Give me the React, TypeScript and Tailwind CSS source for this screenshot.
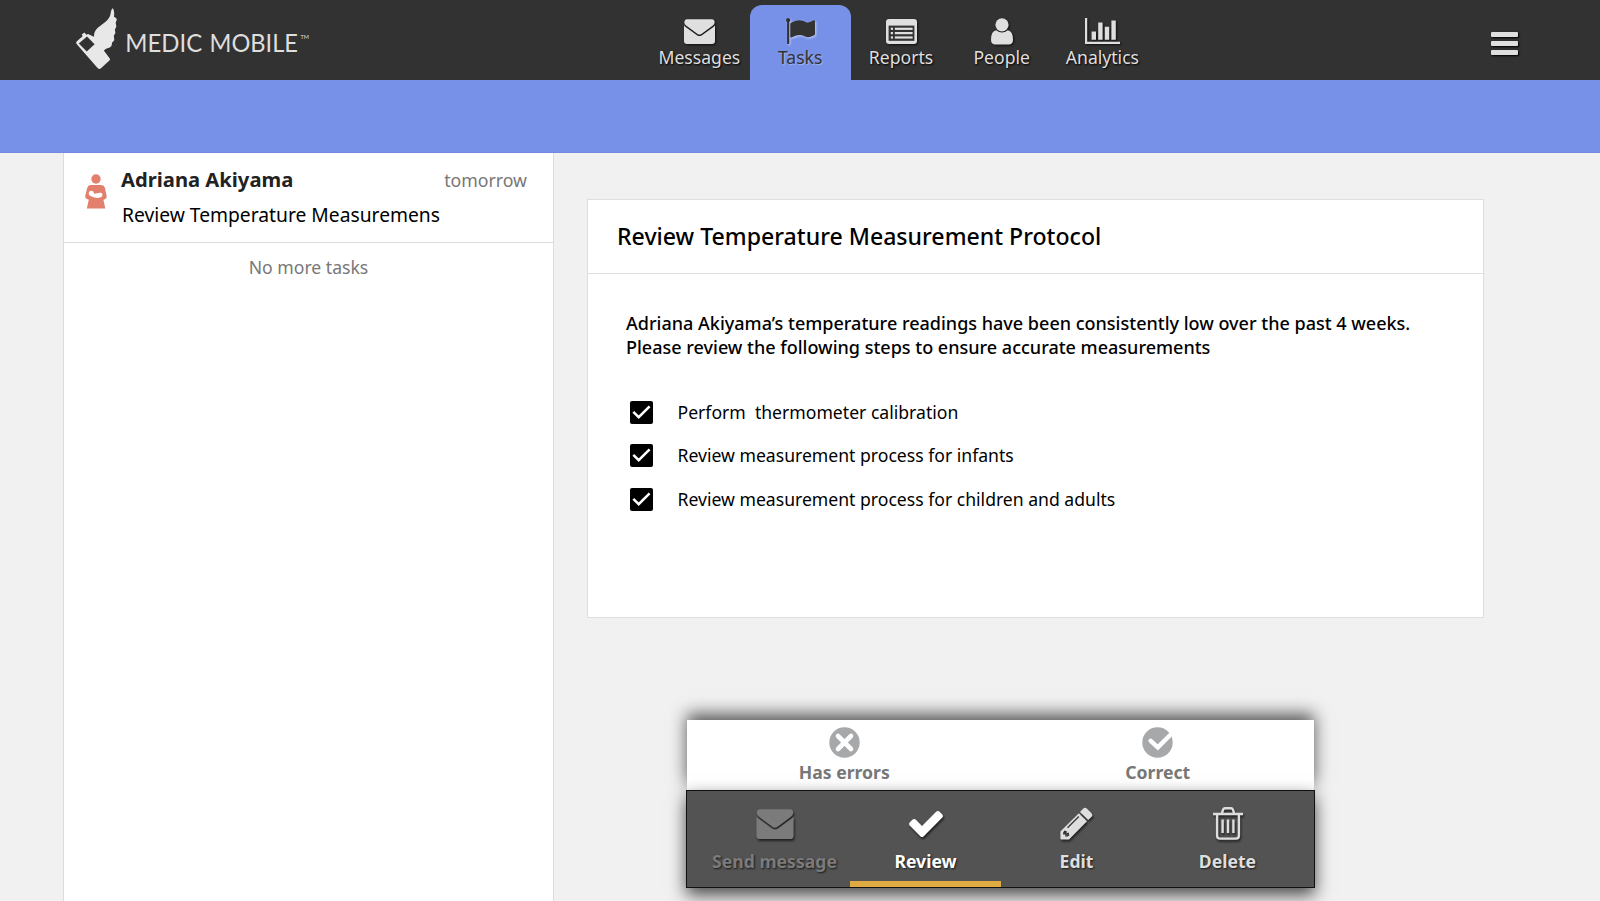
import type { ReactNode } from "react";

const FLAG =
  "M320 256q0 72-64 110v1266q0 13-9.5 22.5t-22.5 9.5h-64q-13 0-22.5-9.5t-9.5-22.5v-1266q-64-38-64-110 0-53 37.5-90.5t90.5-37.5 90.5 37.5 37.5 90.5zm1472 64v763q0 25-12.5 38.5t-39.5 27.5q-215 116-369 116-61 0-123.5-22t-108.5-48-115.5-48-142.5-22q-192 0-464 146-17 9-33 9-26 0-45-19t-19-45v-742q0-32 31-55 21-14 79-43 236-120 421-120 107 0 200 29t219 88q38 19 88 19 54 0 117.5-21t110-47 88-47 54.5-21q26 0 45 19t19 45z";
const CHECK =
  "M1671 566q0 40-28 68l-724 724-136 136q-28 28-68 28t-68-28l-136-136-362-362q-28-28-28-68t28-68l136-136q28-28 68-28t68 28l294 295 656-657q28-28 68-28t68 28l136 136q28 28 28 68z";

function Envelope({ className }: { className: string }) {
  return (
    <svg viewBox="0 0 31 25" className={className} fill="currentColor">
      <path d="M0.3 3.2Q0.6 0.3 3 0.3H28Q30.4 0.3 30.7 3.2Q30.7 5.2 28.6 6.7L17.4 14.9Q15.5 16.2 13.6 14.9L2.4 6.7Q0.3 5.2 0.3 3.2Z" />
      <path d="M0 6.3Q0.6 7.2 1.6 8L13 16.2Q15.5 17.9 18 16.2L29.4 8Q30.4 7.2 31 6.3V22Q31 25 28 25H3Q0 25 0 22Z" />
    </svg>
  );
}

function Flag() {
  return (
    <svg viewBox="64 128 1728 1536" preserveAspectRatio="none" className="h-[26px] w-[29px] drop-shadow-[1px_1px_1px_rgba(255,255,255,0.55)]" fill="currentColor">
      <path d={FLAG} />
    </svg>
  );
}

function Report() {
  return (
    <svg viewBox="0 0 31 25" className="h-[25px] w-[31px]">
      <rect width="31" height="25" rx="3" fill="currentColor" />
      <rect x="2.6" y="6.6" width="25.8" height="15.2" fill="#323232" />
      <g fill="currentColor">
        <rect x="4.8" y="8.7" width="2.2" height="2.2" />
        <rect x="4.8" y="13" width="2.2" height="2.2" />
        <rect x="4.8" y="17.4" width="2.2" height="2.2" />
        <rect x="8.8" y="8.7" width="17.8" height="2.2" />
        <rect x="8.8" y="13" width="17.8" height="2.2" />
        <rect x="8.8" y="17.4" width="17.8" height="2.2" />
      </g>
    </svg>
  );
}

function Person() {
  return (
    <svg viewBox="0 0 22 27" className="h-[27px] w-[22px]" fill="currentColor">
      <path d="M5.2 12.2Q11 17 16.8 12.2Q22 13 22 21.8Q22 26.6 17.6 26.6H4.4Q0 26.6 0 21.8Q0 13 5.2 12.2Z" />
      <circle cx="11" cy="6.8" r="6.6" />
    </svg>
  );
}

function Chart() {
  return (
    <svg viewBox="0 0 35 26" className="h-[26px] w-[35px]" fill="currentColor">
      <path d="M0 0H2.2V23.8H35V26H0ZM6.6 13.4H11V21.8H6.6ZM13.2 4.6H17.6V21.8H13.2ZM19.8 8.8H24.2V21.8H19.8ZM26.4 2.4H30.8V21.8H26.4Z" />
    </svg>
  );
}

function Logo() {
  return (
    <svg viewBox="0 0 240 66" className="ml-[74px] mt-[6px] h-[66px] w-[240px]" fill="#e8e8e8">
      <path d="M38.7 2.3C40.4 4 40.4 8.6 40 10.8Q43 12 42.7 14.2Q41.2 16.4 41.8 17.8Q43 20.6 41.8 22Q40.4 23 41 24.6Q42 27.4 40.4 28.8Q39.4 29.8 40 31.2Q40.8 33.8 39.3 35.4Q37.4 36.4 38 37.6Q38 40.2 35.8 41.6Q32.4 42 29.8 44.4L35.8 52.4Q36.4 53.6 35.4 54.6L27 62.2Q25.4 63.8 23.8 62.2L2.6 38Q1.6 36.8 2.6 35.6L8.6 30.2L7.8 28.6L10.4 26.6L12.4 28.8L14 28L20 30.8Q19.6 25.6 23.8 21.8L31.6 15.8Q36 12 36.6 7.6Q37.2 3.2 38.7 2.3Z" />
      <path d="M13 30.4L20.6 38.2L12.8 45.4L4.8 37.4Z" fill="#323232" />
      <g fontFamily="Lato, sans-serif" fill="#dedede">
        <text x="51.2" y="45.8" fontSize="24.8" textLength="77" lengthAdjust="spacingAndGlyphs">MEDIC</text>
        <text x="135.5" y="45.8" fontSize="24.8" textLength="88.5" lengthAdjust="spacingAndGlyphs">MOBILE</text>
        <text x="226.4" y="32.8" fontSize="6" textLength="8.6" lengthAdjust="spacingAndGlyphs">TM</text>
      </g>
    </svg>
  );
}

function Mother() {
  return (
    <svg viewBox="0 0 22 35" className="h-[35px] w-[22px]" fill="#e37f6d">
      <circle cx="11" cy="5" r="4.7" />
      <path d="M5.6 11H16.4Q19.3 11.2 20 14L21.7 22.3Q21.8 24.4 20 25.2L18.4 25.8L20.3 34.6H1.8L3.8 25.8L1.5 24.8Q0 24 0.2 22L2.2 14Q2.9 11.2 5.6 11Z" />
      <g fill="#fff">
        <circle cx="6.3" cy="19.2" r="2.5" />
        <path d="M7 18.6Q9 20.2 11 19.6Q14 18.4 16 18.8Q17.8 19.4 17.4 21Q17.2 23.6 13 23.9Q9 24.2 4.6 21.6Z" />
      </g>
    </svg>
  );
}

function Pencil() {
  return (
    <svg viewBox="0 0 33 33" className="h-[33px] w-[33px]" fill="currentColor">
      <path fillRule="evenodd" d="M18.8 6.2L27 14.3L9 32.4H1.4Q0.4 32.4 0.4 31.4V24.4ZM18.3 8.9L7 20.2L8 21.2L19.3 9.9ZM4.3 23.6L3.1 25.8V27.6H5.2V29.6L7.2 29.8L9.4 28.6L8.6 25.6L6.5 26.2L6.8 24.2Z" />
      <path d="M20 4.9L23.1 1.7Q25 0 27 1.7L31.4 6.1Q33.1 8.2 31.4 10.1L28.2 13.1Z" />
    </svg>
  );
}

function Trash() {
  return (
    <svg viewBox="0 0 30 33" className="h-[33px] w-[30px]" fill="none" stroke="currentColor" strokeWidth="2.4" strokeLinejoin="round">
      <path d="M0 7H30M8.8 6.5L10.2 2.4Q10.6 1.3 12 1.3H18Q19.4 1.3 19.8 2.4L21.2 6.5M4.1 7V28.5Q4.1 31.6 7 31.6H23Q25.9 31.6 25.9 28.5V7" />
      <path d="M9.6 12.5V26M15 12.5V26M20.4 12.5V26" />
    </svg>
  );
}

function Tick() {
  return (
    <span className="flex size-[23px] items-center justify-center rounded-[2px] bg-black">
      <svg viewBox="0 0 23 23" className="size-[23px]" fill="none" stroke="#fff" strokeWidth="2.5">
        <path d="M3.3 10.8L8.7 16.2L19.6 5.3" />
      </svg>
    </span>
  );
}

function NavItem({ label, icon, active = false }: { label: string; icon: ReactNode; active?: boolean }) {
  return (
    <a
      className={
        active
          ? "flex h-[75px] w-[101px] flex-col items-center rounded-t-[12px] bg-[#7891e8] text-[#333] [text-shadow:1px_1px_1px_rgba(255,255,255,0.3)]"
          : "flex h-[75px] w-[100.7px] flex-col items-center text-[#dfdfdf] [text-shadow:1px_1px_2px_#000]"
      }
    >
      <span className={active ? "mt-[11.5px] flex h-[28px] items-center" : "mt-[12px] flex h-[28px] items-center drop-shadow-[1px_1px_1px_rgba(0,0,0,0.7)]"}>{icon}</span>
      <span className="text-[17.6px] leading-[24px]">{label}</span>
    </a>
  );
}

function Action({ label, icon, tone, selected = false }: { label: string; icon: ReactNode; tone: string; selected?: boolean }) {
  return (
    <button className={`flex h-full w-[151px] flex-col items-center ${tone}`}>
      <span className="mt-[15px] flex h-[35px] items-center drop-shadow-[1px_2px_1px_rgba(0,0,0,0.6)]">{icon}</span>
      <span className="mt-[8px] whitespace-nowrap text-[17.6px] font-bold leading-[24px] [text-shadow:1px_1px_2px_rgba(0,0,0,0.7)]">{label}</span>
      {selected && <span className="mt-auto h-[6px] w-full bg-[#e0ab42]" />}
    </button>
  );
}

export default function App() {
  return (
    <div className="flex h-[901px] w-[1600px] flex-col overflow-hidden bg-[#f1f1f1] font-['Noto_Sans',sans-serif] text-black">
      <header className="flex h-[80px] shrink-0 bg-[#323232]">
        <div className="w-[649px]"><Logo /></div>
        <nav className="flex pt-[5px]">
          <NavItem label="Messages" icon={<Envelope className="h-[25px] w-[31px]" />} />
          <NavItem label="Tasks" icon={<Flag />} active />
          <NavItem label="Reports" icon={<Report />} />
          <NavItem label="People" icon={<Person />} />
          <NavItem label="Analytics" icon={<Chart />} />
        </nav>
        <button className="ml-auto mr-[82px] mt-[32px] flex h-[23px] w-[27px] flex-col justify-between">
          <span className="h-[5px] w-full rounded-[1px] bg-[#dfdfdf] shadow-[1px_1px_2px_#000]" />
          <span className="h-[5px] w-full rounded-[1px] bg-[#dfdfdf] shadow-[1px_1px_2px_#000]" />
          <span className="h-[5px] w-full rounded-[1px] bg-[#dfdfdf] shadow-[1px_1px_2px_#000]" />
        </button>
      </header>
      <div className="h-[73px] shrink-0 border-b border-[#7189e0] bg-[#7891e8]" />
      <main className="flex flex-1">
        <aside className="ml-[63px] w-[491px] border-x border-[#dcdcdc] bg-white">
          <div className="flex h-[90px] border-b border-[#dcdcdc] pl-[21px]">
            <div className="mt-[21px] w-[36px]"><Mother /></div>
            <div className="flex-1 pt-[12px]">
              <div className="flex justify-between pr-[26px]">
                <h2 className="text-[20.2px] font-bold leading-[28px] text-[#222]">Adriana Akiyama</h2>
                <span className="pt-[1px] text-[17.7px] leading-[28px] text-[#777]">tomorrow</span>
              </div>
              <p className="mt-[8px] whitespace-nowrap pl-px text-[19.25px] leading-[26px]">Review Temperature Measuremens</p>
            </div>
          </div>
          <p className="pt-[11px] text-center text-[17.6px] leading-[26px] text-[#777]">No more tasks</p>
        </aside>
        <section className="pl-[33px] pt-[46px]">
          <article className="h-[419px] w-[897px] border border-[#dedede] bg-white">
            <h1 className="flex h-[74px] items-center border-b border-[#dedede] pl-[29px] text-[23.1px] font-medium">Review Temperature Measurement Protocol</h1>
            <p className="whitespace-nowrap pl-[38px] pt-[37px] text-[18.03px] font-medium leading-[24px]">
              Adriana Akiyama’s temperature readings have been consistently low over the past 4 weeks.
              <br />
              Please review the following steps to ensure accurate measurements
            </p>
            <ul className="mt-[42px] flex flex-col gap-[20.4px] pl-[41.5px] text-[17.6px] leading-[23px]">
              <li className="flex gap-[25px] whitespace-pre"><Tick />Perform  thermometer calibration</li>
              <li className="flex gap-[25px]"><Tick />Review measurement process for infants</li>
              <li className="flex gap-[25px]"><Tick />Review measurement process for children and adults</li>
            </ul>
          </article>
          <div className="ml-[99px] mt-[102px] w-[629px]">
            <div className="mx-px flex h-[70px] bg-white shadow-[0_-6px_16px_0_rgba(0,0,0,0.65)]">
              <button className="flex flex-1 flex-col items-center pl-px pt-[7px] text-[#777]">
                <svg viewBox="0 0 31 31" className="size-[31px]">
                  <circle cx="15.5" cy="15.5" r="15.2" fill="#a6a8aa" />
                  <path d="M9 9L22 22M22 9L9 22" stroke="#fff" strokeWidth="4.6" strokeLinecap="round" />
                </svg>
                <span className="mt-[2px] text-[17.6px] font-bold leading-[24px]">Has errors</span>
              </button>
              <button className="flex flex-1 flex-col items-center pl-px pt-[7px] text-[#777]">
                <svg viewBox="0 0 31 31" className="size-[31px]">
                  <circle cx="15.5" cy="15.5" r="15.2" fill="#a6a8aa" />
                  <path d="M8.7 13.8L15.8 20.4L30 6.2" fill="none" stroke="#fff" strokeWidth="4.4" strokeLinecap="round" />
                </svg>
                <span className="mt-[2px] text-[17.6px] font-bold leading-[24px]">Correct</span>
              </button>
            </div>
            <div className="flex h-[98px] justify-center border border-[#111] bg-[#535353] pl-px shadow-[0_7px_16px_0_rgba(0,0,0,0.7)]">
              <Action label="Send message" tone="text-[#7b7b7b]" icon={<Envelope className="h-[30px] w-[38px]" />} />
              <Action
                label="Review"
                tone="text-white"
                selected
                icon={
                  <svg viewBox="121 334 1550 1188" className="h-[26px] w-[34px]" fill="currentColor">
                    <path d={CHECK} />
                  </svg>
                }
              />
              <Action label="Edit" tone="text-[#dedede]" icon={<Pencil />} />
              <Action label="Delete" tone="text-[#dedede]" icon={<Trash />} />
            </div>
          </div>
        </section>
      </main>
    </div>
  );
}
